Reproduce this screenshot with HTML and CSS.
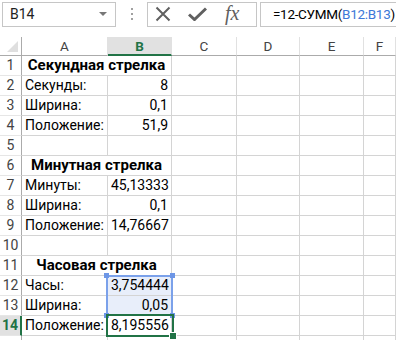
FILE: index.html
```html
<!DOCTYPE html>
<html lang="ru">

<head>
  <meta charset="UTF-8">
  <title>Стрелки часов</title>
  <link rel="stylesheet" href="styles.css">
</head>

<body>
  <div class="bar">
    <div class="namebox">
      <span>B14</span>
      <span class="drop"></span>
    </div>
    <div class="dots"><i></i><i></i><i></i></div>
    <div class="btns">
      <svg class="ico" width="16" height="16" viewBox="0 0 16 16">
        <path d="M1.5 1.5 L14.5 14.5 M14.5 1.5 L1.5 14.5" stroke="#606060" stroke-width="2" fill="none" />
      </svg>
      <svg class="ico" width="19" height="14" viewBox="0 0 19 14">
        <path d="M1 7.5 L6.5 12.5 L18 1.5" stroke="#606060" stroke-width="3" fill="none" />
      </svg>
      <span class="fx">fx</span>
    </div>
    <div class="formula">=12-СУММ(<span class="ref">B12:B13</span>)</div>
  </div>

  <div class="sheet">
    <div class="grid">
      <div class="corner"><span class="tri"></span></div>
      <div class="ch">A</div>
      <div class="ch sel">B</div>
      <div class="ch">C</div>
      <div class="ch">D</div>
      <div class="ch">E</div>
      <div class="ch">F</div>

      <div class="rh">1</div>
      <div class="c title span2">Секундная стрелка</div>
      <div class="c"></div><div class="c"></div><div class="c"></div><div class="c"></div>

      <div class="rh">2</div>
      <div class="c">Секунды:</div><div class="c num">8</div>
      <div class="c"></div><div class="c"></div><div class="c"></div><div class="c"></div>

      <div class="rh">3</div>
      <div class="c">Ширина:</div><div class="c num">0,1</div>
      <div class="c"></div><div class="c"></div><div class="c"></div><div class="c"></div>

      <div class="rh">4</div>
      <div class="c">Положение:</div><div class="c num">51,9</div>
      <div class="c"></div><div class="c"></div><div class="c"></div><div class="c"></div>

      <div class="rh">5</div>
      <div class="c"></div><div class="c"></div>
      <div class="c"></div><div class="c"></div><div class="c"></div><div class="c"></div>

      <div class="rh">6</div>
      <div class="c title span2">Минутная стрелка</div>
      <div class="c"></div><div class="c"></div><div class="c"></div><div class="c"></div>

      <div class="rh">7</div>
      <div class="c">Минуты:</div><div class="c num">45,13333</div>
      <div class="c"></div><div class="c"></div><div class="c"></div><div class="c"></div>

      <div class="rh">8</div>
      <div class="c">Ширина:</div><div class="c num">0,1</div>
      <div class="c"></div><div class="c"></div><div class="c"></div><div class="c"></div>

      <div class="rh">9</div>
      <div class="c">Положение:</div><div class="c num">14,76667</div>
      <div class="c"></div><div class="c"></div><div class="c"></div><div class="c"></div>

      <div class="rh">10</div>
      <div class="c"></div><div class="c"></div>
      <div class="c"></div><div class="c"></div><div class="c"></div><div class="c"></div>

      <div class="rh">11</div>
      <div class="c title span2">Часовая стрелка</div>
      <div class="c"></div><div class="c"></div><div class="c"></div><div class="c"></div>

      <div class="rh">12</div>
      <div class="c">Часы:</div><div class="c num hl">3,754444</div>
      <div class="c"></div><div class="c"></div><div class="c"></div><div class="c"></div>

      <div class="rh">13</div>
      <div class="c">Ширина:</div><div class="c num hl">0,05</div>
      <div class="c"></div><div class="c"></div><div class="c"></div><div class="c"></div>

      <div class="rh sel">14</div>
      <div class="c">Положение:</div><div class="c num">8,195556</div>
      <div class="c"></div><div class="c"></div><div class="c"></div><div class="c"></div>

      <div class="rh"></div>
      <div class="c"></div><div class="c"></div>
      <div class="c"></div><div class="c"></div><div class="c"></div><div class="c"></div>
    </div>

    <!-- диапазон из формулы -->
    <div class="range">
      <span class="h tl"></span><span class="h tr"></span>
      <span class="h bl"></span><span class="h br"></span>
    </div>
    <!-- активная ячейка -->
    <div class="active"><span class="fill"></span></div>
  </div>
</body>

</html>
```

FILE: styles.css
```css
body {
  margin: 0;
  width: 396px;
  height: 340px;
  overflow: hidden;
  background: #fff;
  font-family: Roboto, "Liberation Sans", sans-serif;
  color: #000;
}

.bar {
  display: flex;
  align-items: center;
  height: 28px;
  padding: 0 0 0 2px;
  margin-bottom: 9px;
}

.namebox {
  box-sizing: border-box;
  width: 114px;
  height: 25px;
  border: 1px solid #c6c6c6;
  display: flex;
  align-items: center;
  justify-content: space-between;
  padding: 0 8px 0 7px;
  font-size: 14px;
  color: #222;
}

.drop {
  width: 0;
  height: 0;
  border-left: 4px solid transparent;
  border-right: 4px solid transparent;
  border-top: 4px solid #777;
}

.dots {
  width: 31px;
  display: flex;
  flex-direction: column;
  align-items: center;
  gap: 3px;
}

.dots i {
  display: block;
  width: 2px;
  height: 2px;
  background: #a0a0a0;
}

.btns {
  box-sizing: border-box;
  width: 110px;
  height: 25px;
  border: 1px solid #c6c6c6;
  display: flex;
  align-items: center;
  padding-left: 7px;
  gap: 17px;
}

.fx {
  font-family: "Liberation Serif", serif;
  font-style: italic;
  font-size: 20px;
  color: #606060;
  margin-left: 1px;
  margin-top: -2px;
}

.formula {
  box-sizing: border-box;
  flex: 1;
  min-width: 0;
  height: 25px;
  margin-left: 3px;
  border: 1px solid #c6c6c6;
  border-right: 0;
  padding-left: 12px;
  font-size: 13.5px;
  letter-spacing: -0.3px;
  line-height: 23px;
  white-space: nowrap;
  overflow: hidden;
}

.ref {
  color: #3c78d8;
}

.sheet {
  position: relative;
}

.grid {
  display: grid;
  grid-template-columns: 22px 86px 64px 65px 63px 64px 32px;
  grid-template-rows: 19px repeat(15, 20px);
  font-size: 14px;
}

.grid > div {
  box-sizing: border-box;
  border-right: 1px solid #d4d4d4;
  border-bottom: 1px solid #d4d4d4;
  white-space: nowrap;
  line-height: 19px;
}

.corner {
  position: relative;
  border-right-color: #ababab !important;
  border-bottom-color: #ababab !important;
}

.tri {
  position: absolute;
  right: 3px;
  bottom: 3px;
  width: 0;
  height: 0;
  border-left: 11px solid transparent;
  border-bottom: 11px solid #dfdfdf;
}

.ch {
  text-align: center;
  color: #444;
  font-size: 13.5px;
  line-height: 18px !important;
  border-right-color: #e1e1e1 !important;
  border-bottom-color: #ababab !important;
}

.ch.sel {
  background: #e1e1e1;
  color: #217346;
  font-weight: bold;
  border-bottom: 2px solid #217346 !important;
}

.rh {
  text-align: center;
  color: #444;
  font-size: 14px;
  border-right-color: #ababab !important;
  border-bottom-color: #e6e6e6 !important;
}

.rh.sel {
  background: #e1e1e1;
  color: #217346;
  font-weight: bold;
  border-right: 2px solid #217346 !important;
}

.c {
  padding: 0 3px;
  overflow: visible;
}

.num {
  text-align: right;
}

.title {
  font-weight: bold;
  font-size: 15px;
  text-align: center;
}

.span2 {
  grid-column: span 2;
}

.hl {
  background: #e8eefa;
}

.range {
  position: absolute;
  left: 106px;
  top: 238px;
  width: 67px;
  height: 41px;
  box-sizing: border-box;
  border: 2px solid #7ba1ea;
}

.h {
  position: absolute;
  width: 5px;
  height: 5px;
  background: #6d96e6;
}

.tl { left: -4px; top: -4px; }
.tr { right: -4px; top: -4px; }
.bl { left: -4px; bottom: -4px; }
.br { right: -4px; bottom: -4px; }

.active {
  position: absolute;
  left: 106px;
  top: 277px;
  width: 68px;
  height: 23px;
  box-sizing: border-box;
  border: 2px solid #217346;
}

.fill {
  position: absolute;
  right: -5px;
  bottom: -5px;
  width: 6px;
  height: 6px;
  background: #217346;
  border: 1px solid #fff;
}
```
